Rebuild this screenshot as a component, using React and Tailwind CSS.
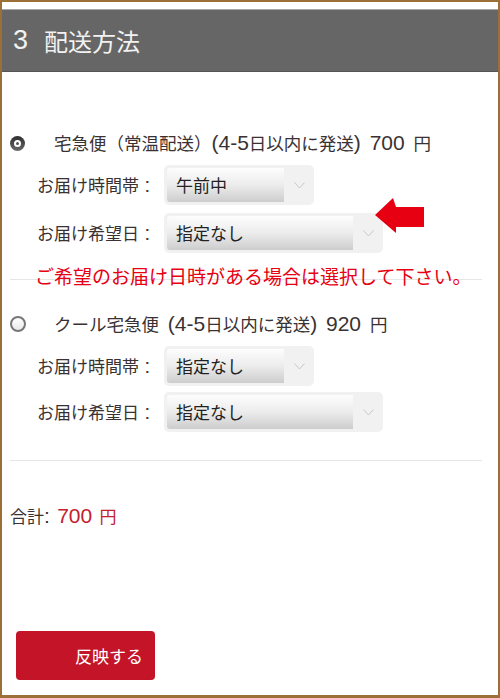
import React from 'react';

const FONT = { fontFamily: '"Noto Sans CJK JP", "Noto Sans", sans-serif' };
const LATIN = { fontFamily: '"Liberation Sans", Arial, sans-serif' };

// Latin runs in the reference render larger than the kana next to them
const L = ({ children, size = 'text-[21px]' }) => (
  <span className={size} style={LATIN}>
    {children}
  </span>
);

const Chevron = () => (
  <svg width="11" height="7" viewBox="0 0 11 7" fill="none">
    <path d="M0.5 0.5 L5.5 6 L10.5 0.5" stroke="#c9c9c9" strokeWidth="1" />
  </svg>
);

const SelectBox = ({ value, wide }) => (
  <div
    className={`flex h-[40px] rounded-[5px] bg-[#f1f1f1] p-[3px] pr-0 ${
      wide ? 'w-[219px]' : 'w-[150px]'
    }`}
  >
    <div className="flex flex-1 items-center rounded-l-[3px] bg-gradient-to-b from-[#fdfdfd] via-[#ececec] to-[#cdcdcd] pl-[9px] text-[17px] text-[#222]">
      {value}
    </div>
    <div className="flex w-[30px] items-center justify-center">
      <Chevron />
    </div>
  </div>
);

const Radio = ({ checked }) =>
  checked ? (
    <span className="flex h-[15px] w-[15px] items-center justify-center rounded-full bg-gradient-to-b from-[#2e2e2e] to-[#6a6a6a]">
      <span className="flex h-[7px] w-[7px] items-center justify-center rounded-full bg-white">
        <span className="h-[3px] w-[3px] rounded-full bg-[#555]" />
      </span>
    </span>
  ) : (
    <span className="h-[16px] w-[16px] rounded-full border-2 border-[#777] bg-gradient-to-b from-white to-[#e8e8e8]" />
  );

const Row = ({ label, value, wide, children }) => (
  <div className="relative flex items-center pl-[35px]">
    <span className="w-[127px] text-[17px] text-[#3a3232]">
      {label}
      <L size="text-[20px]"> :</L>
    </span>
    <SelectBox value={value} wide={wide} />
    {children}
  </div>
);

const RedArrow = () => (
  <svg
    className="absolute left-[371px] top-[-16px]"
    width="52"
    height="38"
    viewBox="0 0 52 38"
  >
    <polygon
      points="2,18 20,1 23,10 51,10 51,30 23,30 23,36"
      fill="#e60012"
    />
  </svg>
);

export default function App() {
  return (
    <div
      className="flex h-[698px] w-[500px] flex-col border-2 border-b-[3px] border-[#9c6f37] bg-white"
      style={FONT}
    >
      <div className="mt-[7px] flex h-[63px] items-center border-t border-b border-t-[#a8a8a8] border-b-[#555] bg-[#666] pl-[11px] text-[24px] text-[#f2f2f2]">
        <span className="text-[27px]" style={LATIN}>3</span>
        <span className="ml-[16px]">配送方法</span>
      </div>

      <div className="mt-[57px] flex h-[28px] items-center pl-[8px] text-[17.5px] text-[#3a3232] [word-spacing:3px]">
        <Radio checked />
        <span className="ml-[29px]">
          宅急便（常温配送）<L>(4-5</L>日以内に発送<L>) 700 </L>円
        </span>
      </div>
      <div className="mt-[8px]">
        <Row label="お届け時間帯" value="午前中" />
      </div>
      <div className="mt-[8px]">
        <Row label="お届け希望日" value="指定なし" wide>
          <RedArrow />
        </Row>
      </div>

      <div className="mx-[8px] mt-[26px] h-px w-[472px] bg-[#e6e6e6]" />
      <div className="-mt-[16px] h-[24px] pl-[33px] text-[19px] leading-[24px] text-[#e60012]">
        ご希望のお届け日時がある場合は選択して下さい。
      </div>

      <div className="mt-[22px] flex h-[28px] items-center pl-[8px] text-[17.5px] text-[#3a3232] [word-spacing:3px]">
        <Radio />
        <span className="ml-[28px]">
          クール宅急便<L> (4-5</L>日以内に発送<L>) 920 </L>円
        </span>
      </div>
      <div className="mt-[8px]">
        <Row label="お届け時間帯" value="指定なし" />
      </div>
      <div className="mt-[6px]">
        <Row label="お届け希望日" value="指定なし" wide />
      </div>

      <div className="mx-[8px] mt-[28px] h-px w-[472px] bg-[#e6e6e6]" />

      <div className="mt-[43px] h-[24px] pl-[8px] text-[17px] leading-[24px] text-[#3a3232] [word-spacing:1.5px]">
        合計<L>: </L>
        <span className="text-[#c4202e]">
          <L>700 </L>円
        </span>
      </div>

      <div className="ml-[14px] mt-[103px] flex h-[49px] w-[139px] items-center rounded-[4px] bg-[#c41428] pl-[59px] text-[17px] text-white">
        反映する
      </div>
    </div>
  );
}
